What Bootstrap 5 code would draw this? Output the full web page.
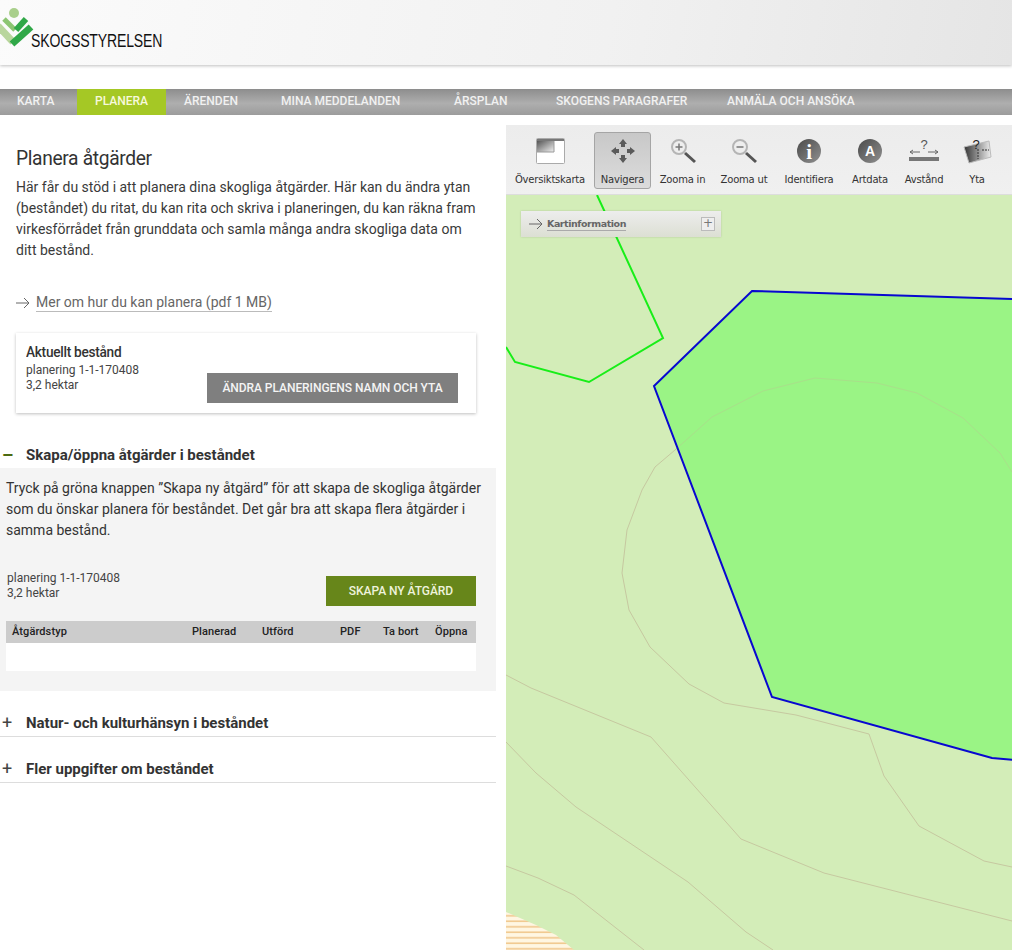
<!DOCTYPE html>
<html lang="sv">
<head>
  <meta charset="UTF-8">
  <title>Planera åtgärder</title>
  <link href="https://cdn.jsdelivr.net/npm/bootstrap@5.3.3/dist/css/bootstrap.min.css" rel="stylesheet">
  <style>
    html, body { height: 950px; overflow: hidden; }
    body { font-family: Roboto, sans-serif; color: #333; background: #fff; font-size: 14px; }
    .site-head { height: 65px; background: linear-gradient(100deg, #fbfbfb, #f1f1f1 60%, #e5e5e5); box-shadow: 0 1px 3px rgba(0,0,0,.25); }
    .logo-box { width: 170px; height: 65px; }
    .logo-word { font-family: "Liberation Sans", sans-serif; font-size: 18px; letter-spacing: -.2px; color: #111; left: 31px; top: 31px; line-height: 20px; transform: scaleX(.78); transform-origin: left center; white-space: nowrap; }
    .main-nav { margin-top: 24px; height: 26px; background: linear-gradient(#8d8d8d, #aeaeae 55%, #9c9c9c); }
    .main-nav a { font-size: 12px; font-weight: 500; color: #f1f1f1; text-decoration: none; line-height: 24px; height: 26px; display: block; white-space: nowrap; }
    .main-nav a.active-tab { background: #a5c825; color: #f7f9dc; }
    .left-col { width: 496px; flex: none; padding-top: 31px; }
    .map-col { width: 506px; margin-left: 10px; margin-top: 10px; flex: none; }
    .intro { padding: 0 16px; }
    .intro h1 { font-size: 20px; font-weight: 400; letter-spacing: -.35px; margin: 0 0 7px; line-height: 24px; color: #333; transform: scaleX(.96); transform-origin: left center; }
    .intro p { font-size: 14px; line-height: 21px; margin: 0 0 31px; color: #3a3a3a; }
    .more-link { font-size: 14px; color: #666; line-height: 21px; }
    .more-link span { border-bottom: 1px solid #bbb; padding-bottom: 1px; }
    .more-link svg { margin-right: 6px; }
    .stand-card { margin: 20px 20px 0 16px; height: 80px; border: 0; border-radius: 0; box-shadow: 0 1px 3px rgba(0,0,0,.25); padding: 9px 10px 10px; }
    .stand-card h2 { font-size: 15px; font-weight: 500; letter-spacing: -.3px; margin: 0 0 1px; line-height: 20px; color: #333; transform: scaleX(.91); transform-origin: left center; white-space: nowrap; }
    .small-info { font-size: 12px; line-height: 15px; color: #444; }
    .btn-grey { background: #7f7f7f; color: #f4f4f4; border: 0; border-radius: 0; font-size: 12px; font-weight: 500; height: 30px; width: 251px; padding: 0; margin: 31px 8px 0 0; letter-spacing: -.05px; }
    .btn-green { background: #67861a; color: #eef3dc; border: 0; border-radius: 0; font-size: 12px; font-weight: 500; height: 30px; width: 150px; padding: 0; margin-top: 7px; letter-spacing: -.05px; }
    .acc-head { font-size: 15px; font-weight: 700; height: 25px; line-height: 24px; color: #333; }
    .acc-sign { width: 26px; flex: none; font-weight: 400; font-size: 18px; line-height: 24px; padding-left: 2px; color: #444; }
    .sign-open { color: #4c6b12; font-weight: 700; }
    .acc-body { background: #f4f4f4; height: 223px; padding: 10px 20px 0 6px; }
    .acc-body p { font-size: 14px; line-height: 21px; margin: 0 -10px 28px 0; color: #333; }
    .act-table { margin: 15px 0 0; --bs-table-bg: transparent; table-layout: fixed; }
    .act-table th { background: #ccc; font-size: 11px; font-weight: 500; color: #222; height: 22px; padding: 0; border: 0; letter-spacing: .1px; vertical-align: middle; }
    .act-table td { background: #fff; height: 28px; padding: 0; border: 0; }
    .acc-row { height: 46px; padding-top: 20px; border-bottom: 1px solid #ddd; }
    .tool-bar { height: 70px; background: linear-gradient(#ececec, #f0f0f0); border-bottom: 1px solid #ddd; font-family: "DejaVu Sans", sans-serif; font-size: 10px; color: #333; padding-top: 7px; }
    .tool-item { height: 57px; text-align: center; flex: none; padding-top: 6px; white-space: nowrap; letter-spacing: -.2px; }
    .tool-item svg { display: block; margin: 0 auto 8px; }
    .tool-on { background: linear-gradient(#c8c8c8, #dcdcdc); border: 1px solid #a5a5a5; border-radius: 3px; padding-top: 5px; }
    .map-area { height: 755px; background: #d3edb8; overflow: hidden; }
    .map-area svg { display: block; }
    .info-box { left: 15px; top: 16px; width: 200px; height: 26px; background: linear-gradient(#ededed, #dcdfd3); font-family: "DejaVu Sans", sans-serif; font-size: 9.5px; font-weight: 700; color: #666; box-shadow: 0 0 2px rgba(0,0,0,.15); }
    .info-box b { border-bottom: 1px solid #aaa; margin-left: 4px; letter-spacing: -.45px; line-height: 13px; }
    .info-plus { width: 14px; height: 14px; border: 1px solid #bbb; background: #eee; right: 6px; top: 6px; font-weight: 400; font-size: 12px; line-height: 11px; text-align: center; color: #777; }
  </style>
</head>
<body>
  <header class="site-head">
    <div class="logo-box position-relative">
      <svg width="40" height="50" viewBox="0 0 40 50" class="position-absolute top-0 start-0">
        <circle cx="14" cy="13" r="5" fill="#a9cf8b"/>
        <path d="M4 19 L15 30" stroke="#8cc572" stroke-width="5" fill="none"/>
        <path d="M-2 26 L13 42" stroke="#b9d69d" stroke-width="7" fill="none"/>
        <path d="M16 30 L26 19" stroke="#30a848" stroke-width="6" fill="none"/>
        <path d="M12 44 L31 27" stroke="#30a848" stroke-width="7" fill="none"/>
      </svg>
      <span class="logo-word position-absolute">SKOGSSTYRELSEN</span>
    </div>
  </header>

  <nav class="main-nav d-flex">
    <a href="#" style="width:77px;padding-left:17px">KARTA</a>
    <a href="#" class="active-tab" style="width:89px;padding-left:18px">PLANERA</a>
    <a href="#" style="width:97px;padding-left:18px">ÄRENDEN</a>
    <a href="#" style="width:173px;padding-left:18px">MINA MEDDELANDEN</a>
    <a href="#" style="width:102px;padding-left:18px">ÅRSPLAN</a>
    <a href="#" style="width:171px;padding-left:18px">SKOGENS PARAGRAFER</a>
    <a href="#" style="padding-left:18px">ANMÄLA OCH ANSÖKA</a>
  </nav>

  <div class="d-flex">
    <main class="left-col">
      <div class="intro">
        <h1>Planera åtgärder</h1>
        <p>Här får du stöd i att planera dina skogliga åtgärder. Här kan du ändra ytan (beståndet) du ritat, du kan rita och skriva i planeringen, du kan räkna fram virkesförrådet från grunddata och samla många andra skogliga data om ditt bestånd.</p>
        <div class="more-link">
          <svg width="14" height="12" viewBox="0 0 14 12"><path d="M0 6 H13 M8 1 L13 6 L8 11" fill="none" stroke="#666" stroke-width="1"/></svg><span>Mer om hur du kan planera (pdf 1 MB)</span>
        </div>
      </div>

      <div class="card stand-card flex-row justify-content-between">
        <div>
          <h2>Aktuellt bestånd</h2>
          <div class="small-info">planering 1-1-170408<br>3,2 hektar</div>
        </div>
        <button class="btn btn-grey">ÄNDRA PLANERINGENS NAMN OCH YTA</button>
      </div>

      <div class="acc-head d-flex" style="margin-top:30px">
        <span class="acc-sign sign-open">–</span>Skapa/öppna åtgärder i beståndet
      </div>
      <div class="acc-body">
        <p>Tryck på gröna knappen ”Skapa ny åtgärd” för att skapa de skogliga åtgärder som du önskar planera för beståndet. Det går bra att skapa flera åtgärder i samma bestånd.</p>
        <div class="d-flex justify-content-between align-items-start">
          <div class="small-info" style="padding-left:1px;margin-top:2px">planering 1-1-170408<br>3,2 hektar</div>
          <button class="btn btn-green">SKAPA NY ÅTGÄRD</button>
        </div>
        <table class="table act-table">
          <thead>
            <tr>
              <th style="width:186px;padding-left:6px">Åtgärdstyp</th>
              <th style="width:70px">Planerad</th>
              <th style="width:78px">Utförd</th>
              <th style="width:43px">PDF</th>
              <th style="width:52px">Ta bort</th>
              <th>Öppna</th>
            </tr>
          </thead>
          <tbody><tr><td colspan="6"></td></tr></tbody>
        </table>
      </div>

      <div class="acc-head d-flex acc-row"><span class="acc-sign">+</span>Natur- och kulturhänsyn i beståndet</div>
      <div class="acc-head d-flex acc-row"><span class="acc-sign">+</span>Fler uppgifter om beståndet</div>
    </main>

    <section class="map-col">
      <div class="tool-bar d-flex">
        <div class="tool-item" style="width:88px">
          <svg width="29" height="26" viewBox="0 0 29 26"><rect x=".5" y=".5" width="28" height="25" rx="1" fill="#fff" stroke="#aaa"/><rect x="1" y="1" width="27" height="2" fill="#777"/><defs><linearGradient id="ov" x1="0" y1="0" x2="1" y2="1"><stop offset="0" stop-color="#555"/><stop offset="1" stop-color="#f2f2f2"/></linearGradient></defs><rect x="1" y="3" width="17" height="11" fill="url(#ov)"/><path d="M18 3 V14 H1" fill="none" stroke="#999"/></svg>
          Översiktskarta
        </div>
        <div class="tool-item tool-on" style="width:57px">
          <svg width="26" height="26" viewBox="0 0 26 26" fill="#5a5a5a"><path d="M13 1 L17 6 H15 V9 H11 V6 H9 Z"/><path d="M13 25 L17 20 H15 V17 H11 V20 H9 Z"/><path d="M1 13 L6 9 V11 H9 V15 H6 V17 Z"/><path d="M25 13 L20 9 V11 H17 V15 H20 V17 Z"/></svg>
          Navigera
        </div>
        <div class="tool-item" style="width:63px">
          <svg width="26" height="26" viewBox="0 0 26 26"><circle cx="9" cy="9" r="7" fill="#eee" stroke="#b5b5b5" stroke-width="2"/><path d="M5.5 9 H12.5 M9 5.5 V12.5" stroke="#777" stroke-width="1.5"/><path d="M15 15 L25 24" stroke="#555" stroke-width="3"/></svg>
          Zooma in
        </div>
        <div class="tool-item" style="width:60px">
          <svg width="26" height="26" viewBox="0 0 26 26"><circle cx="9" cy="9" r="7" fill="#eee" stroke="#b5b5b5" stroke-width="2"/><path d="M5.5 9 H12.5" stroke="#777" stroke-width="1.5"/><path d="M15 15 L25 24" stroke="#555" stroke-width="3"/></svg>
          Zooma ut
        </div>
        <div class="tool-item" style="width:70px">
          <svg width="26" height="26" viewBox="0 0 26 26"><defs><linearGradient id="gc" x1="0" y1="0" x2="1" y2="1"><stop offset="0" stop-color="#4a4a4a"/><stop offset="1" stop-color="#909090"/></linearGradient></defs><circle cx="13" cy="13" r="12" fill="url(#gc)"/><text x="13" y="21" text-anchor="middle" font-family="Liberation Serif, serif" font-size="21" font-weight="700" fill="#fff">i</text></svg>
          Identifiera
        </div>
        <div class="tool-item" style="width:52px">
          <svg width="26" height="26" viewBox="0 0 26 26"><circle cx="13" cy="13" r="12" fill="url(#gc)"/><text x="13" y="18" text-anchor="middle" font-family="Liberation Sans, sans-serif" font-size="14" font-weight="700" fill="#fff">A</text></svg>
          Artdata
        </div>
        <div class="tool-item" style="width:56px">
          <svg width="30" height="26" viewBox="0 0 30 26"><text x="15" y="11" text-anchor="middle" font-family="Liberation Sans, sans-serif" font-size="13" fill="#555">?</text><path d="M1 14 H11 M19 14 H29 M1 14 L4 12 M1 14 L4 16 M29 14 L26 12 M29 14 L26 16" stroke="#666" fill="none"/><rect x="0" y="19" width="30" height="4" fill="#777"/></svg>
          Avstånd
        </div>
        <div class="tool-item" style="width:50px">
          <svg width="30" height="26" viewBox="0 0 30 26"><defs><linearGradient id="ya" x1="0" y1="0" x2="1" y2="0"><stop offset="0" stop-color="#333"/><stop offset="1" stop-color="#eee"/></linearGradient></defs><path d="M2 9 L27 3 L29 19 L7 25 Z" fill="url(#ya)" stroke="#bbb"/><path d="M16 11 V21 M20 12 H27" stroke="#333" fill="none" stroke-dasharray="2 1"/><text x="14" y="11" text-anchor="middle" font-family="Liberation Sans, sans-serif" font-size="13" fill="#222">?</text></svg>
          Yta
        </div>
      </div>
      <div class="map-area position-relative">
        <svg width="506" height="755" viewBox="506 195 506 755">
          <defs>
            <pattern id="hatch" width="5.5" height="5.5" patternUnits="userSpaceOnUse" y="912"><rect width="5.5" height="5.5" fill="#fff6e2"/><rect y="3" width="5.5" height="1.6" fill="#f0c88e"/></pattern>
          </defs>
          <path d="M506 912 L536 925 L556 935 L574 950 H506 Z" fill="url(#hatch)"/>
          <g fill="none" stroke="#c6c8a0" stroke-width="1">
            <path d="M675 450 L655 467 L642 490 L627 530 L622 573 L629 610 L650 647 L689 684 L724 703 L796 715 L869 734 L884 776 L919 826 L984 861 L1012 867"/>
            <path d="M506 675 L531 688 L651 737 L741 839 L824 873 L1012 921"/>
            <path d="M506 742 L536 773 L576 807 L688 882 L746 932 L773 950"/>
            <path d="M506 866 L538 878 L574 895 L644 950"/>
          </g>
          <path d="M597 195 L663 338 L589 382 L515 362 L506 347" fill="none" stroke="#18ee18" stroke-width="2"/>
          <path d="M752 291 L1014 299 V760 L992 758 L772 697 L654 386 Z" fill="#9af485"/>
          <path d="M1012 472 L1000 453 L963 418 L917 393 L877 383 L815 378 L763 391 L712 417 L675 450" fill="none" stroke="#a8e08a" stroke-width="1"/>
          <path d="M752 291 L1014 299 V760 L992 758 L772 697 L654 386 Z" fill="none" stroke="#0808d0" stroke-width="2"/>
        </svg>
        <div class="info-box position-absolute d-flex align-items-center ps-2">
          <svg width="14" height="12" viewBox="0 0 14 12"><path d="M0 6 H13 M8 1 L13 6 L8 11" fill="none" stroke="#666"/></svg>
          <b>Kartinformation</b>
          <span class="info-plus position-absolute">+</span>
        </div>
      </div>
    </section>
  </div>
  <script src="https://cdn.jsdelivr.net/npm/bootstrap@5.3.3/dist/js/bootstrap.bundle.min.js"></script>
</body>
</html>
